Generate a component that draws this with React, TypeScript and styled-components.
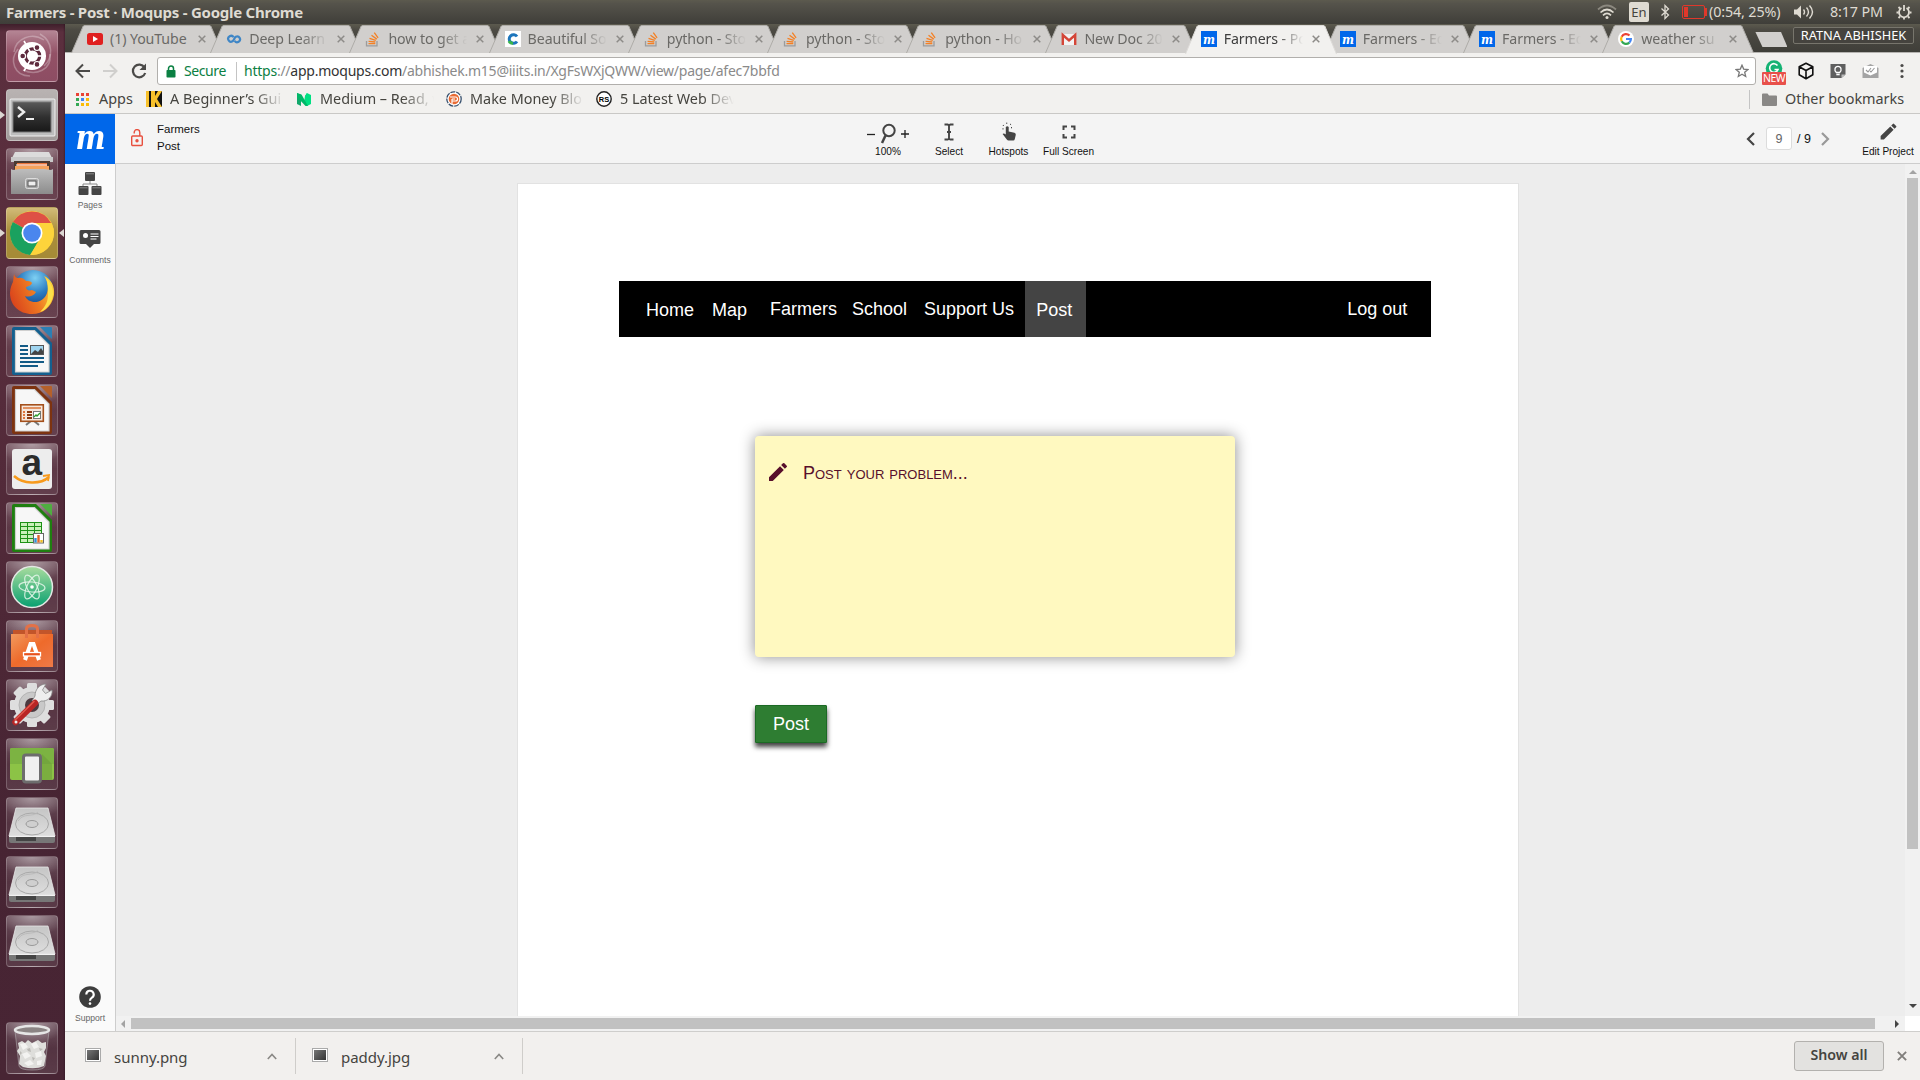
import React from "react";
import styled, { createGlobalStyle, css } from "styled-components";

const UI = `"Noto Sans", "Open Sans", sans-serif`;
const ARIAL = `"Liberation Sans", Arial, sans-serif`;

const Global = createGlobalStyle`
  * { box-sizing: border-box; }
  body { margin: 0; background: #ededed; font-family: ${UI}; overflow: hidden; }
  svg { display: block; flex: none; }
`;

const Screen = styled.div`
  width: 1920px;
  height: 1080px;
  display: flex;
  flex-direction: column;
  overflow: hidden;
`;

/* ---------- Desktop panel ---------- */
const TopPanel = styled.header`
  height: 24px;
  flex: none;
  display: flex;
  align-items: center;
  background: linear-gradient(#5c5a4e 0, #55534b 15%, #3f3e39 100%);
  color: #dfdbd2;
  padding: 0 8px 0 6px;
  white-space: nowrap;
`;
const WindowTitle = styled.div`
  font: 700 15px/24px ${UI};
  letter-spacing: -0.25px;
  flex: 1;
`;
const Tray = styled.div`
  display: flex;
  align-items: center;
  height: 24px;
`;
const TrayText = styled.span<{ $w: number; $ml: number; $mr: number }>`
  font: 14.3px/24px ${UI};
  letter-spacing: -0.12px;
  width: ${(p) => p.$w}px;
  margin: 0 ${(p) => p.$mr}px 0 ${(p) => p.$ml}px;
`;
const Layout = styled.span`
  width: 20px;
  height: 20px;
  margin: 0 11px 0 12px;
  border-radius: 2px;
  background: #dfdbd2;
  color: #45433d;
  font: 13px/21px ${UI};
  text-align: center;
`;
const Battery = styled.span`
  width: 23px;
  height: 14px;
  margin-left: 12px;
  border: 1.5px solid #e0382b;
  border-radius: 2px;
  padding: 1px;
  &::before {
    content: "";
    display: block;
    width: 4px;
    height: 100%;
    background: #e0382b;
  }
`;

const Body = styled.div`
  flex: 1;
  display: flex;
  min-height: 0;
`;

/* ---------- Launcher ---------- */
const Launcher = styled.nav`
  width: 65px;
  flex: none;
  background: linear-gradient(90deg, transparent 63px, rgba(30, 8, 20, 0.35)),
    linear-gradient(#3f1f2b 0, #5b2f3e 8px, #572d3c 30%, #472433 75%, #482534 100%);
  display: flex;
  flex-direction: column;
  gap: 7px;
  padding: 6px 0 6px;
`;
const Slot = styled.div<{ $end?: boolean }>`
  display: flex;
  align-items: center;
  height: 52px;
  flex: none;
  ${(p) => p.$end && css`margin-top: auto;`}
`;
const Pip = styled.i<{ $on?: boolean; $right?: boolean }>`
  width: ${(p) => (p.$right ? 5 : 6)}px;
  flex: none;
  &::before {
    content: "";
    display: ${(p) => (p.$on ? "block" : "none")};
    width: 0;
    border: solid transparent;
    border-width: 4px 0 4px 5px;
    border-left-color: #dcd7d3;
    transform: ${(p) => (p.$right ? "translateX(1px) scaleX(-1)" : "none")};
  }
`;
const Tile = styled.div<{ $bg?: string }>`
  width: 52px;
  height: 52px;
  border-radius: 4px;
  border: 1px solid rgba(255, 255, 255, 0.2);
  background: ${(p) =>
    p.$bg ||
    "radial-gradient(ellipse 34px 20px at 50% 0, rgba(255,255,255,.42), rgba(255,255,255,0)), linear-gradient(rgba(255,255,255,.2), rgba(255,255,255,.07) 50%, rgba(255,255,255,.1))"};
  svg { margin: -1px; }
`;

const I = ({ children }: { children: React.ReactNode }) => (
  <svg width="52" height="52" viewBox="0 0 52 52">{children}</svg>
);

const Dash = () => (
  <I>
    <g fill="none" stroke="#fff" strokeOpacity=".28" strokeWidth="1.5">
      <path d="M8 22C10 8 26 2 38 10" /><path d="M34 4c14 8 13 24 4 32" /><path d="M44 24c2 16-14 22-27 16" /><path d="M24 46C8 46 3 30 12 19" />
    </g>
    <circle cx="26" cy="26" r="14" fill="#fff" />
    <circle cx="26.500" cy="26" r="7.200" fill="none" stroke="#5d2a3d" strokeWidth="3.200" />
    <path d="M26.500 26L18 11M26.500 26L18 41M26.500 26H40" stroke="#fff" strokeWidth="1.600" />
    <g fill="#5d2a3d" stroke="#fff" strokeWidth="1.200"><circle cx="16.700" cy="26" r="2.900" /><circle cx="31" cy="17.600" r="2.900" /><circle cx="31" cy="34.400" r="2.900" /></g>
  </I>
);
const Terminal = () => (
  <I>
    <defs><linearGradient id="tm" x2="0" y2="1"><stop stopColor="#5a5a5a" /><stop offset=".5" stopColor="#303030" /><stop offset="1" stopColor="#181818" /></linearGradient></defs>
    <rect x="4" y="10" width="45" height="37" rx="1" fill="#bdbdbd" stroke="#fff" strokeOpacity=".8" />
    <rect x="7" y="13" width="38" height="30" fill="url(#tm)" stroke="#777" />
    <path d="M12 18l6 5-6 5" fill="none" stroke="#eee" strokeWidth="2.400" /><path d="M20 30h8" stroke="#eee" strokeWidth="2" />
  </I>
);
const Files = () => (
  <I>
    <defs><linearGradient id="fl" x2="0" y2="1"><stop stopColor="#bdbdbd" /><stop offset="1" stopColor="#8c8c8c" /></linearGradient></defs>
    <path d="M9 4h34l4 8H5z" fill="#dcdcdc" /><rect x="5" y="9" width="42" height="5" fill="#c9c9c9" />
    <rect x="8" y="13" width="36" height="11" fill="#4a3a32" /><path d="M11 15h30v7H11z" fill="#e9743a" /><path d="M9 18h34v5H9z" fill="#f4a35c" /><path d="M10 17h31" stroke="#fff" />
    <path d="M7 22l7-1h24l7 1 2-1v25H5V21z" fill="url(#fl)" />
    <rect x="19.500" y="30.500" width="13" height="10" rx="2" fill="#aaa" stroke="#ddd" /><rect x="22" y="33" width="8" height="5" fill="#eee" stroke="#555" />
  </I>
);
const Chrome = () => (
  <I>
    <circle cx="26" cy="26" r="22" fill="#fdd43b" />
    <path d="M26 26L6.900 15A22 22 0 0 1 45.100 16H26z" fill="#de5145" />
    <path d="M6.900 15A22 22 0 0 0 24 47.900L35 31z" fill="#1aa15f" />
    <path d="M45.400 16A22 22 0 0 1 24.500 47.900L34.500 30 35 16z" fill="#fdd43b" />
    <circle cx="26" cy="26" r="10.500" fill="#fff" /><circle cx="26" cy="26" r="8.800" fill="#4a86ee" />
  </I>
);
const Firefox = () => (
  <I>
    <defs>
      <radialGradient id="fg" cx=".55" cy=".2" r=".8"><stop stopColor="#7ed0f3" /><stop offset=".5" stopColor="#2a7cc2" /><stop offset="1" stopColor="#123a7c" /></radialGradient>
      <linearGradient id="fo" x1="0" x2="1" y1=".7" y2=".3"><stop stopColor="#d8401c" /><stop offset=".55" stopColor="#ee7b22" /><stop offset="1" stopColor="#fbd23a" /></linearGradient>
    </defs>
    <circle cx="27" cy="24" r="20" fill="url(#fg)" />
    <path d="M8 8c1 3 2 4 4 4 4-1 6 1 8 3 2 0 5 0 6 2-1 3-4 3-6 4 0 3 3 4 6 3l4 2c-3 5-8 5-11 4 3 8 18 9 22-3 2-6 0-13-3-17 7 3 11 10 10 19-2 12-11 19-22 19C13 48 4 39 4 27 4 22 6 18 7 16z" fill="url(#fo)" />
    <path d="M40 12c8 7 9 18 4 26-3 4-6 7-10 8 6-6 8-11 8-18 0-6 0-11-2-16z" fill="#fce04a" />
  </I>
);
const LibreDoc = ({ main, dark, children }: { main: string; dark: string; children: React.ReactNode }) => (
  <I>
    <path d="M8 2h22l16 16v30q0 2-2 2H8q-2 0-2-2V4q0-2 2-2z" fill={dark} /><path d="M34 2h11q1 0 1 1v11z" fill={main} />
    <path d="M9.500 5.500h19L43 20v27H9.500z" fill="#f7f7f7" stroke="#cfcfcf" strokeWidth="1.200" />
    {children}
  </I>
);
const Writer = () => (
  <LibreDoc main="#2c7fb4" dark="#14608f">
    <path d="M14 21h8M14 25h8M14 29h8M14 33h24M14 37h24M14 41h18" stroke="#145b86" strokeWidth="2" />
    <rect x="24.500" y="20.500" width="13" height="9" fill="#9fd4ef" stroke="#555" /><path d="M25 29l4-4 3 2 3-4 2 3v3z" fill="#444" />
  </LibreDoc>
);
const Impress = () => (
  <LibreDoc main="#b5602a" dark="#7d3310">
    <path d="M20 41l5-4h3l5 4" fill="none" stroke="#777" strokeWidth="2" />
    <rect x="14.800" y="20.800" width="22.500" height="16.500" fill="#f6e7dc" stroke="#a4501c" strokeWidth="1.600" />
    <path d="M17 24h18" stroke="#d9743a" strokeWidth="1.500" /><path d="M17 28h2M17 31h2M17 34h2" stroke="#e0763c" strokeWidth="2" /><path d="M21 28h5M21 31h5M21 34h5" stroke="#8c3b12" strokeWidth="2" />
    <rect x="27.500" y="27.500" width="7" height="7" fill="#fff" stroke="#777" /><path d="M28 33l2-2 1 1 3-3" stroke="#2a9b2a" fill="none" strokeWidth="1.300" />
  </LibreDoc>
);
const AmazonMark = styled.text`
  font: 700 37px "Liberation Sans", Arial, sans-serif;
  fill: #2b2b2b;
`;
const Amazon = () => (
  <I>
    <rect x="6" y="6" width="40" height="40" rx="3" fill="#ededed" />
    <AmazonMark x="15.500" y="32">a</AmazonMark>
    <path d="M8 33c9 8 26 9 35 1" fill="none" stroke="#f79a1c" strokeWidth="2.600" /><path d="M37 33l6-1-1 6" fill="none" stroke="#f79a1c" strokeWidth="1.800" />
  </I>
);
const Calc = () => (
  <LibreDoc main="#4fae40" dark="#1f7f10">
    <rect x="14" y="20" width="22" height="21" fill="#1d9116" />
    <g fill="#c8f0b8">{[0, 1, 2, 3, 4].map((r) => [0, 1, 2].map((c) => <rect key={`${r}${c}`} x={15 + c * 7} y={21 + r * 4} width="6" height="3" />))}</g>
    <rect x="27.500" y="31.500" width="10" height="9.500" fill="#fff" stroke="#666" /><path d="M29.500 36v4.500" stroke="#3092d6" strokeWidth="2.400" /><path d="M32.500 33v7.500" stroke="#e0662a" strokeWidth="2.400" /><path d="M35.500 38v2.500" stroke="#f0bd20" strokeWidth="2.400" />
  </LibreDoc>
);
const Atom = () => (
  <I>
    <defs><linearGradient id="at" x2="0" y2="1"><stop stopColor="#a8dc9e" /><stop offset="1" stopColor="#08a070" /></linearGradient></defs>
    <circle cx="26" cy="26" r="20.500" fill="url(#at)" stroke="#e4e8e4" strokeWidth="1.500" />
    <g fill="none" stroke="#e6f6ea" strokeOpacity=".85" strokeWidth="1.200"><ellipse cx="26" cy="26" rx="13" ry="5" transform="rotate(5 26 26)" /><ellipse cx="26" cy="26" rx="13" ry="5" transform="rotate(64 26 26)" /><ellipse cx="26" cy="26" rx="13" ry="5" transform="rotate(116 26 26)" /></g>
    <circle cx="26" cy="26" r="1.800" fill="#fff" />
  </I>
);
const Software = () => (
  <I>
    <defs><linearGradient id="sw" x2="1" y2="1"><stop stopColor="#f29a5e" /><stop offset=".5" stopColor="#ee6a2b" /><stop offset="1" stopColor="#ee7a48" /></linearGradient></defs>
    <path d="M7 10h39v5H7z" fill="#c2552a" /><path d="M5 14h42v33H5z" fill="url(#sw)" />
    <path d="M20.500 18V9q0-3.500 5.500-3.500t5.500 3.500v9" fill="none" stroke="#e37147" strokeWidth="3" />
    <path d="M19 40l5.500-16h3L33 40" fill="none" stroke="#fff" strokeWidth="4" /><rect x="17.500" y="32.500" width="17" height="3.500" fill="#e8521c" stroke="#fff" strokeWidth="1.300" />
  </I>
);
const Settings = () => (
  <I>
    <g fill="#dedede">
      {[0, 45, 90, 135].map((a) => <rect key={a} x="21" y="4" width="10" height="44" rx="1.500" transform={`rotate(${a} 26 26)`} />)}
      <circle cx="26" cy="26" r="18" />
    </g>
    <circle cx="26" cy="26" r="13" fill="#c9c9c9" stroke="#b4b4b4" /><circle cx="26" cy="26" r="7" fill="#4c3a40" />
    <path d="M29 17c0-7 5-12 11-12l-3.500 6 3 3.500L46 11c1 6-4 12-11 11l-5 4-4-4z" fill="#eee" stroke="#888" strokeWidth=".8" />
    <path d="M29 24L9.500 43" stroke="#b92525" strokeWidth="6.500" strokeLinecap="round" /><path d="M28 22.500L9 41" stroke="#e05a4e" strokeWidth="1.500" strokeLinecap="round" /><circle cx="10" cy="43" r="1.500" fill="#eee" />
  </I>
);
const Android = () => (
  <I>
    <rect x="4" y="10" width="44" height="32" rx="2" fill="#8cc346" /><path d="M4 26V12q0-2 2-2h40q2 0 2 2v14z" fill="#7cb342" /><path d="M36 16l10 10v16H36z" fill="#6a9a38" opacity=".5" />
    <rect x="17.500" y="17" width="17" height="27" rx="2.500" fill="#f0f0f0" stroke="#6d6d6d" strokeWidth="3" />
  </I>
);
const Disk = () => (
  <I>
    <defs><linearGradient id="hd" x2="0" y2="1"><stop stopColor="#c5c5c5" /><stop offset="1" stopColor="#dedede" /></linearGradient></defs>
    <path d="M10 11h32l7 28H3z" fill="url(#hd)" stroke="#e9e9e9" strokeWidth=".8" /><path d="M3 39h46v5q0 2-2 2H5q-2 0-2-2z" fill="#777" /><path d="M10 40h20v4H10z" fill="#444" /><path d="M3 39.500h46" stroke="#f2f2f2" />
    <ellipse cx="26" cy="27" rx="16.500" ry="11" fill="none" stroke="#a9a9a9" /><ellipse cx="26" cy="27" rx="6" ry="3.500" fill="#cfcfcf" stroke="#999" /><path d="M12 24c6-9 14-3 20-9" fill="none" stroke="#bbb" />
  </I>
);
const Trash = () => (
  <I>
    <path d="M9 9l4 35q1 4 13 4t13-4l4-35z" fill="#fff" fillOpacity=".12" stroke="#bbb" strokeOpacity=".5" />
    <path d="M12 21l4-2 3 2 3-3 4 3 6-3 4 3 4-1 0 6-2 4 2 4-2 10q-9 4-21 1l-4-3 1-8-3-5 2-3z" fill="#dededb" />
    <g fill="#f3f3f1"><path d="M14 22l5-1 3 4-5 3zM25 22l5-2 3 5-5 2zM16 32l5-2 4 4-6 3zM29 31l6-2 1 5-6 2zM18 41l6-3 4 4-6 2zM31 39l5-1-1 5-4 0z" /></g>
    <g fill="#b9b8b4"><path d="M21 27l3-1 1 4-3-1zM33 26l4 1-3 2zM26 35l3 1-2 3zM14 29l2 2-2 2z" /></g>
    <ellipse cx="26" cy="8" rx="17" ry="4" fill="#8b8484" stroke="#e6e6e6" strokeWidth="2.500" />
  </I>
);

/* ---------- Browser ---------- */
const Browser = styled.main`
  flex: 1;
  min-width: 0;
  display: flex;
  flex-direction: column;
  background: #f2f1ef;
`;
const TabStrip = styled.div`
  height: 29px;
  flex: none;
  padding: 1px 0 0 6px;
  display: flex;
  background: linear-gradient(#5c5a4e 0, #4d4b44 20%, #3f3e39 100%);
  border-bottom: 1px solid #b5b3b0;
`;
const TabBox = styled.div<{ $active?: boolean }>`
  width: 152px;
  height: ${(p) => (p.$active ? 29 : 28)}px;
  flex: none;
  margin-right: -12.8px;
  position: relative;
  z-index: ${(p) => (p.$active ? 2 : 1)};
  display: flex;
  align-items: center;
  padding: 0 0 1px 16px;
  color: ${(p) => (p.$active ? "#3e3e3e" : "#6a6966")};
`;
const TabShape = styled.svg`
  position: absolute;
  left: 0;
  top: 0;
  z-index: -1;
`;
const TabText = styled.span<{ $full?: boolean }>`
  width: 82px;
  margin: 0 6px 0 7px;
  overflow: hidden;
  white-space: nowrap;
  font: 14.2px/28px ${UI};
  letter-spacing: -0.1px;
  mask-image: ${(p) => (p.$full ? "none" : "linear-gradient(90deg, #000 53px, transparent 79px)")};
`;
const NewTab = styled.div`
  width: 32px;
  height: 15px;
  margin: 7px 0 0 14px;
  background: #d1cfcd;
  clip-path: polygon(0 0, 80% 0, 100% 100%, 22% 100%);
`;
const Profile = styled.div`
  width: 121px;
  height: 17px;
  margin: 2px 6px 0 auto;
  border: 1px solid #77756c;
  border-radius: 2px;
  background: #45433e;
  color: #fff;
  font: 12.8px/15px ${UI};
  text-align: center;
  white-space: nowrap;
`;

const Toolbar = styled.div`
  height: 35px;
  flex: none;
  display: flex;
  align-items: center;
  padding: 1px 6px 0 9px;
  gap: 8px;
`;
const Address = styled.div`
  width: 1599px;
  flex: none;
  height: 28px;
  margin: 0 -2px 0 1px;
  padding: 0 6px 0 8px;
  border: 1px solid #b1afac;
  border-radius: 3px;
  background: #fff;
  display: flex;
  align-items: center;
  font: 14px/26px ${UI};
  white-space: nowrap;
`;
const Secure = styled.span`
  color: #0b8043;
  width: 52px;
  margin: 0 0 0 8px;
  letter-spacing: -0.4px;
`;
const Url = styled.span`
  flex: 1;
  margin-left: 7px;
  letter-spacing: -0.24px;
  color: #8a8a8a;
  b { font-weight: 400; color: #0b8043; }
  em { font-style: normal; color: #333; }
`;
const Bar = styled.i`
  width: 1px;
  height: 19px;
  flex: none;
  background: #c4c4c4;
`;
const Extension = styled.div`
  width: 24px;
  height: 28px;
  flex: none;
  display: flex;
  flex-direction: column;
  justify-content: center;
  align-items: center;
`;
const NewBadge = styled.span`
  width: 24px;
  height: 13px;
  margin-top: -6px;
  z-index: 1;
  border-radius: 1px;
  background: #e8504a;
  color: #fff;
  font: 10.5px/13px ${UI};
  letter-spacing: -0.5px;
  text-align: center;
`;
const Grammarly = styled(Extension)`
  padding-top: 3px;
`;

const Bookmarks = styled.div`
  height: 26px;
  flex: none;
  display: flex;
  align-items: center;
  border-bottom: 1px solid #c9c8c6;
  padding: 0 14px 3px 11px;
  color: #45443f;
`;
const Bookmark = styled.div<{ $w: number; $gap?: number; $fade?: number }>`
  width: ${(p) => p.$w}px;
  display: flex;
  align-items: center;
  gap: ${(p) => p.$gap ?? 8}px;
  font: 14.4px/22px ${UI};
  white-space: nowrap;
  span {
    ${(p) => p.$fade && css`
      width: ${p.$fade}px;
      overflow: hidden;
      mask-image: linear-gradient(90deg, #000 ${p.$fade - 32}px, transparent ${p.$fade}px);
    `}
  }
`;
const Spacer = styled.i`
  flex: 1;
`;
const Other = styled(Bookmark)`
  margin-left: 12px;
`;

/* ---------- Moqups ---------- */
const Editor = styled.section`
  flex: 1;
  min-height: 0;
  display: grid;
  grid-template: 50px 1fr / 50px 1fr;
`;
const Logo = styled.div`
  background: #0067ea;
  color: #fff;
  font: italic 700 33px/48px "DejaVu Serif", serif;
  text-align: center;
  overflow: hidden;
  span { display: inline-block; transform: scaleX(0.86); }
`;
const AppHeader = styled.div`
  background: #f4f4f4;
  border-bottom: 1px solid #cdcdcd;
  display: flex;
  align-items: center;
  font-family: ${ARIAL};
  color: #111;
`;
const Crumbs = styled.div`
  width: 742px;
  display: flex;
  align-items: center;
  gap: 14px;
  padding-left: 16px;
  font-size: 11.5px;
  line-height: 17px;
  margin-top: -1px;
`;
const Tool = styled.div<{ $w: number }>`
  width: ${(p) => p.$w}px;
  height: 50px;
  display: grid;
  grid-template-rows: 26px 14px;
  align-content: start;
  justify-items: center;
  align-items: center;
  padding-top: 5px;
  font-size: 10.1px;
  white-space: nowrap;
`;
const ZoomRow = styled.div`
  display: flex;
  align-items: center;
  gap: 5px;
  margin-top: 4px;
`;
const Pager = styled.div`
  display: flex;
  align-items: center;
  margin-left: auto;
  font-size: 12.5px;
`;
const PageInput = styled.div`
  width: 26px;
  height: 23px;
  margin: 0 5px 0 10px;
  border: 1px solid #dcdcdc;
  border-radius: 3px;
  background: #fff;
  color: #666;
  line-height: 22px;
  text-align: center;
`;
const PagerNext = styled.span`
  margin-left: 9px;
`;
const EditTool = styled(Tool)`
  margin-left: 26px;
`;
const Side = styled.aside`
  background: #fafafa;
  display: flex;
  flex-direction: column;
  padding-bottom: 8px;
  font: 8.6px/10px ${ARIAL};
  color: #666;
`;
const SideItem = styled.div<{ $top?: number; $bottom?: boolean }>`
  display: flex;
  flex-direction: column;
  align-items: center;
  gap: 5px;
  margin-top: ${(p) => (p.$bottom ? "auto" : `${p.$top}px`)};
`;
const Work = styled.div`
  border-left: 1px solid #cdcdcd;
  background: #ededed;
  display: grid;
  grid-template: 1fr 15px / 1fr 15px;
  min-height: 0;
`;
const Canvas = styled.div`
  padding: 19px 0 0 401px;
  overflow: hidden;
`;
const Page = styled.div`
  width: 1002px;
  height: 1000px;
  background: #fff;
  border: 1px solid #e2e2e2;
  padding: 97px 0 0 101px;
  font-family: ${ARIAL};
`;
const Nav = styled.div`
  width: 812px;
  height: 56px;
  display: flex;
  background: #000;
  color: #fff;
  font-size: 18px;
  line-height: 56px;
`;
const NavLink = styled.a<{ $ml: number; $low?: boolean }>`
  margin-left: ${(p) => p.$ml}px;
  padding-top: ${(p) => (p.$low ? 1 : 0)}px;
  height: 56px;
  white-space: nowrap;
`;
const NavActive = styled(NavLink)`
  width: 61px;
  padding-left: 11px;
  background: #444;
`;
const Note = styled.div`
  width: 480px;
  height: 221px;
  margin: 99px 0 0 136px;
  padding: 24px 11px;
  display: flex;
  gap: 13px;
  border-radius: 4px;
  background: #fff9c0;
  box-shadow: 0 0 15px rgba(0, 0, 0, 0.45);
  color: #570f2b;
  font-size: 18px;
  line-height: 26px;
  font-variant: small-caps;
`;
const PostButton = styled.button`
  display: block;
  width: 72px;
  height: 38px;
  margin: 48px 0 0 136px;
  padding: 1px 0 0;
  border: 1px solid #1b6a24;
  border-radius: 1px;
  background: #2e7d32;
  box-shadow: 0 4px 5px rgba(0, 0, 0, 0.75);
  color: #fff;
  font: 18px ${ARIAL};
`;
const HScroll = styled.div`
  background: #f1f1f1;
  display: flex;
  align-items: center;
  gap: 4px;
  padding-left: 3px;
`;
const VScroll = styled.div`
  background: #f1f1f1;
  display: flex;
  flex-direction: column;
  align-items: center;
  gap: 2px;
  padding: 4px 0 6px;
`;
const Thumb = styled.i<{ $w: number; $h: number }>`
  width: ${(p) => p.$w}px;
  height: ${(p) => p.$h}px;
  background: #c1c1c1;
`;
const Corner = styled.div`
  background: #fff;
`;
const VEnd = styled.span`
  margin-top: auto;
`;
const HEnd = styled.span`
  margin: 0 4px 0 auto;
`;

/* ---------- Downloads ---------- */
const Shelf = styled.footer`
  height: 49px;
  flex: none;
  display: flex;
  align-items: center;
  border-top: 1px solid #cfcecc;
  background: #f2f0ee;
  color: #45443f;
`;
const Download = styled.div<{ $w: number; $pl: number }>`
  width: ${(p) => p.$w}px;
  height: 36px;
  padding: 0 18px 0 ${(p) => p.$pl}px;
  border-right: 1px solid #cfcdca;
  display: flex;
  align-items: center;
  font: 15px/36px ${UI};
  span { flex: 1; padding: 1px 0 0 13px; letter-spacing: -0.03px; }
`;
const Thumbnail = styled.i`
  width: 16px;
  height: 14px;
  margin-bottom: 2px;
  border: 1px solid #aaa;
  background: linear-gradient(135deg, #777, #333) content-box, #fff;
  padding: 1px;
`;
const ShowAll = styled.button`
  width: 90px;
  height: 30px;
  margin: 0 13px 0 auto;
  padding: 0 0 3px;
  border: 1px solid #b3b1ae;
  border-radius: 3px;
  background: #e3e2e0;
  color: #45443f;
  font: 600 14.2px ${UI};
`;
const CloseShelf = styled.span`
  margin-right: 13px;
`;

/* ---------- Small drawings ---------- */
const X = ({ s = 8, c = "#8d8b88" }) => (
  <svg width={s} height={s} viewBox="0 0 8 8"><path d="M.7.7l6.600 6.600M7.300.7L.7 7.300" stroke={c} strokeWidth="1.500" /></svg>
);
const Arrow = ({ d, c = "#454545" }: { d: string; c?: string }) => (
  <svg width="8" height="8" viewBox="0 0 8 8"><path d={d} fill={c} /></svg>
);
const Chevron = ({ c, flip }: { c: string; flip?: boolean }) => (
  <svg width="10" height="14" viewBox="0 0 10 14"><path d={flip ? "M2 1l6 6-6 6" : "M8 1L2 7l6 6"} fill="none" stroke={c} strokeWidth="2.200" /></svg>
);
const UpCaret = () => (
  <svg width="10" height="7" viewBox="0 0 10 7"><path d="M.8 6L5 1.500 9.200 6" fill="none" stroke="#8a8885" strokeWidth="1.600" /></svg>
);
const Pencil = ({ s, c }: { s: number; c: string }) => (
  <svg width={s} height={s} viewBox="0 0 24 24"><path fill={c} d="M3 17.250V21h3.750L17.810 9.940l-3.750-3.750L3 17.250zM20.710 7.040a1 1 0 0 0 0-1.410l-2.340-2.340a1 1 0 0 0-1.410 0l-1.830 1.830 3.750 3.750 1.830-1.830z" /></svg>
);
const MText = styled.text`
  font: italic 700 13px "DejaVu Serif", serif;
  fill: #fff;
  text-anchor: middle;
`;
const Favicon = ({ kind }: { kind: string }) => (
  <svg width="16" height="16" viewBox="0 0 16 16">
    {kind === "yt" && <><rect y="2" width="16" height="12" rx="2.500" fill="#e02020" /><path d="M6 5l5 3-5 3z" fill="#fff" /></>}
    {kind === "dl" && <path d="M7.600 6.300A2.900 2.900 0 1 0 6.500 10.300C8 9.500 8.400 6.500 9.800 5.700A2.900 2.900 0 1 1 8.700 9.900" fill="none" stroke="#3f86c6" strokeWidth="2.200" />}
    {kind === "so" && <g fill="none"><path d="M1.500 10v4.800h10.500V10" stroke="#9b9c9d" strokeWidth="1.300" /><path d="M3.500 12.600h6.800M3.600 10.300l6.700.7M4.500 7.400l6.300 1.900M6.500 4.300l5.300 3.800M9.300 1.600l3.800 5.200" stroke="#f48024" strokeWidth="1.300" /></g>}
    {kind === "c" && <><rect width="16" height="16" fill="#fff" /><path d="M12 5.500A4.300 4.300 0 1 0 12 10.500" fill="none" stroke="#1c75bc" strokeWidth="3" /><path d="M4 10a4.300 4.300 0 0 0 4 2.300" fill="none" stroke="#39b54a" strokeWidth="3" /></>}
    {kind === "gm" && <><rect x="1" y="3" width="14" height="11" fill="#f2f2f2" /><path d="M1.800 14V4L8 9.500 14.200 4v10" fill="none" stroke="#d44638" strokeWidth="2.400" /></>}
    {kind === "mq" && <><rect width="16" height="16" fill="#0067ea" /><MText x="8" y="12.500" textLength="12" lengthAdjust="spacingAndGlyphs">m</MText></>}
    {kind === "gg" && <><circle cx="8" cy="8" r="8" fill="#fff" /><g fill="none" strokeWidth="2.200"><path d="M11.500 4.600A4.900 4.900 0 0 0 3.700 5.700" stroke="#ea4335" /><path d="M3.700 5.700a4.900 4.900 0 0 0 0 4.600" stroke="#fbbc05" /><path d="M3.700 10.300a4.900 4.900 0 0 0 7.600 1.300" stroke="#34a853" /><path d="M11.300 11.600A4.900 4.900 0 0 0 12.900 8H8" stroke="#4285f4" /></g></>}
  </svg>
);

const tabs: [string, string][] = [
  ["yt", "(1) YouTube"], ["dl", "Deep Learn"], ["so", "how to get a"], ["c", "Beautiful So"],
  ["so", "python - Sto"], ["so", "python - Sto"], ["so", "python - Ho"], ["gm", "New Doc 20"],
  ["mq", "Farmers - Po"], ["mq", "Farmers - Ed"], ["mq", "Farmers - Ed"], ["gg", "weather su"],
];
const dots = ["#ea4335", "#ea4335", "#ea4335", "#34a853", "#4285f4", "#fbbc05", "#34a853", "#fbbc05", "#fbbc05"];
const RsText = styled.text`
  font: 700 7.5px "Liberation Sans", Arial, sans-serif;
  text-anchor: middle;
`;

const launcherItems: { el: React.ReactNode; bg?: string; left?: boolean; right?: boolean; end?: boolean }[] = [
  { el: <Dash />, bg: "linear-gradient(#b48594, #935166 45%, #8d4d63)" },
  { el: <Terminal />, bg: "linear-gradient(#b9b3b2, #a19c9b)", left: true },
  { el: <Files /> },
  { el: <Chrome />, bg: "linear-gradient(#d2bb78, #ab8f3d 45%, #a58a36)", left: true, right: true },
  { el: <Firefox /> }, { el: <Writer /> }, { el: <Impress /> }, { el: <Amazon /> }, { el: <Calc /> },
  { el: <Atom /> }, { el: <Software /> }, { el: <Settings /> }, { el: <Android /> },
  { el: <Disk /> }, { el: <Disk /> }, { el: <Disk /> }, { el: <Trash />, end: true },
];

export default function App() {
  return (
    <Screen>
      <Global />
      <TopPanel>
        <WindowTitle>Farmers - Post · Moqups - Google Chrome</WindowTitle>
        <Tray>
          <svg width="20" height="16" viewBox="0 0 20 16" fill="none" strokeWidth="1.700"><path d="M1 5.500q9-8 18 0" stroke="#8b887f" /><path d="M3.500 8.500q6.500-6 13 0" stroke="#dfdbd2" /><path d="M6 11.300q4-3.800 8 0" stroke="#dfdbd2" /><circle cx="10" cy="13.500" r="1.500" fill="#dfdbd2" /></svg>
          <Layout>En</Layout>
          <svg width="10" height="16" viewBox="0 0 10 16"><path d="M1.500 4.500l7 6.500L5 14.500v-13L8.500 5l-7 6.500" fill="none" stroke="#dfdbd2" strokeWidth="1.300" /></svg>
          <Battery />
          <svg width="3" height="8"><rect width="2" height="8" fill="#e0382b" /></svg>
          <TrayText $w={74} $ml={1} $mr={11}>(0:54, 25%)</TrayText>
          <svg width="20" height="16" viewBox="0 0 20 16"><path d="M0 5.500h3l4-4v13l-4-4H0z" fill="#dfdbd2" /><path d="M9.500 5.500q2 2.500 0 5M12.500 3.500q4 4.500 0 9M15.500 1.500q6 6.500 0 13" fill="none" stroke="#dfdbd2" strokeWidth="1.400" /></svg>
          <TrayText $w={54} $ml={16} $mr={12}>8:17 PM</TrayText>
          <svg width="16" height="16" viewBox="0 0 16 16"><path d="M5.500 4a5 5 0 1 0 5 0M8 1v6" fill="none" stroke="#dfdbd2" strokeWidth="1.800" /><path d="M2.500 3l1.500 1.500M12 4.500L13.500 3M.5 8.500h2M13.500 8.500h2M2.500 14L4 12.500M12 12.500l1.500 1.500M8 13.500v2" stroke="#dfdbd2" strokeWidth="1.800" /></svg>
        </Tray>
      </TopPanel>
      <Body>
        <Launcher>
          {launcherItems.map((it, i) => (
            <Slot key={i} $end={it.end}><Pip $on={it.left} /><Tile $bg={it.bg}>{it.el}</Tile><Pip $on={it.right} $right /></Slot>
          ))}
        </Launcher>
        <Browser>
          <TabStrip>
            {tabs.map(([icon, title], i) => {
              const active = i === 8;
              const h = active ? 29 : 28;
              return (
                <TabBox key={i} $active={active}>
                  <TabShape width="152" height={h} viewBox={`0 0 152 ${h}`}>
                    <path d={`M.5 ${h}L12 1.500Q12.500.5 14 .5H138Q139.500.5 140 1.500L151.500 ${h}`} fill={active ? "#f2f1ef" : "#d1cfcd"} stroke={active ? "#dddbd8" : "#aeaca8"} />
                  </TabShape>
                  <Favicon kind={icon} />
                  <TabText $full={i === 0}>{title}</TabText>
                  <X />
                </TabBox>
              );
            })}
            <NewTab />
            <Profile>RATNA ABHISHEK</Profile>
          </TabStrip>
          <Toolbar>
            <svg width="18" height="16" viewBox="0 0 18 16"><path d="M16 8H3M9 1.500L2.500 8 9 14.500" fill="none" stroke="#4b4a48" strokeWidth="2" /></svg>
            <svg width="20" height="16" viewBox="0 0 20 16"><path d="M3 8h13M10 1.500L16.500 8 10 14.500" fill="none" stroke="#d0cfcd" strokeWidth="2" /></svg>
            <svg width="20" height="18" viewBox="0 0 20 18"><path d="M16.500 5.500A6.300 6.300 0 1 0 17.200 11" fill="none" stroke="#4b4a48" strokeWidth="2.200" /><path d="M18 1.500v6.500h-6.500z" fill="#4b4a48" /></svg>
            <Address>
              <svg width="10" height="13" viewBox="0 0 10 13"><rect x=".5" y="5" width="9" height="7.500" rx=".8" fill="#0b8043" /><path d="M2.500 6V3.500a2.500 2.500 0 0 1 5 0V6" fill="none" stroke="#0b8043" strokeWidth="1.500" /></svg>
              <Secure>Secure</Secure><Bar />
              <Url><b>https</b>://<em>app.moqups.com</em>/abhishek.m15@iiits.in/XgFsWXjQWW/view/page/afec7bbfd</Url>
              <svg width="14" height="14" viewBox="0 0 14 14"><path d="M7 1.200l1.700 3.900 4.200.4-3.200 2.800 1 4.200L7 10.300l-3.700 2.200 1-4.200L1.100 5.500l4.200-.4z" fill="none" stroke="#777" strokeWidth="1.300" /></svg>
            </Address>
            <Grammarly>
              <svg width="18" height="18" viewBox="0 0 18 18"><circle cx="9" cy="8.500" r="8.300" fill="#15b374" /><path d="M12.500 5.500a4.300 4.300 0 1 0 .5 4H9.500" fill="none" stroke="#fff" strokeWidth="1.600" /></svg>
              <NewBadge>NEW</NewBadge>
            </Grammarly>
            <Extension><svg width="16" height="18" viewBox="0 0 16 18"><path d="M8 1.200l6.800 3.600v8L8 16.800l-6.800-4v-8zM1.200 4.800L8 8.500l6.800-3.700M8 8.500v8" fill="none" stroke="#111" strokeWidth="1.600" strokeLinejoin="round" /></svg></Extension>
            <Extension><svg width="16" height="16" viewBox="0 0 16 16"><path d="M.5 1h15v10.500L11.500 15H.5z" fill="#5f5f5f" /><path d="M15.500 11.500l-4 3.500v-3.500z" fill="#bbb" /><path d="M6.300 9.500C3.800 7.500 4.800 3.300 8 3.300s4.200 4.200 1.700 6.200z" fill="none" stroke="#fff" strokeWidth="1.300" /><path d="M6.300 11.500h3.400" stroke="#fff" strokeWidth="1.600" /></svg></Extension>
            <Extension><svg width="17" height="14" viewBox="0 0 17 14"><path d="M.5 4L8.500 0l8 4v10H.5z" fill="#a4a4a4" /><path d="M2 2h13v6.500L8.500 11.500 2 8.500z" fill="#fff" /><path d="M4 6l2 2 3-4M8 7l1 1 3.500-4" fill="none" stroke="#999" strokeWidth="1.100" /></svg></Extension>
            <Extension><svg width="4" height="16" viewBox="0 0 4 16" fill="#4b4a48"><circle cx="2" cy="2.500" r="1.600" /><circle cx="2" cy="8" r="1.600" /><circle cx="2" cy="13.500" r="1.600" /></svg></Extension>
          </Toolbar>
          <Bookmarks>
            <Bookmark $w={70} $gap={10}>
              <svg width="13" height="13" viewBox="0 0 13 13">{dots.map((c, i) => <rect key={i} x={(i % 3) * 5} y={Math.floor(i / 3) * 5} width="3" height="3" fill={c} />)}</svg>
              <span>Apps</span>
            </Bookmark>
            <Bookmark $w={150} $fade={115}>
              <svg width="16" height="16" viewBox="0 0 16 16"><rect width="16" height="16" fill="#111" /><path d="M0 0h3v16H0zM5 0h4v5l3-5h4l-5 8 5 8h-4L9 11v5H5z" fill="#f8c12c" /></svg>
              <span>A Beginner’s Gui</span>
            </Bookmark>
            <Bookmark $w={150} $fade={114}>
              <svg width="16" height="14" viewBox="0 0 16 14"><path d="M1 1l4 2v11l-4-2z" fill="#12a86b" /><path d="M9 4l2-3 4 2v9l-4 2-3-4z" fill="#00e082" /><path d="M1 1l4.500 1.500L12 14H9.500L1 5z" fill="#00b868" /><path d="M9 4l2-3v11z" fill="#00e082" /></svg>
              <span>Medium – Read, w</span>
            </Bookmark>
            <Bookmark $w={150} $fade={114}>
              <svg width="16" height="16" viewBox="0 0 16 16"><circle cx="8" cy="8" r="7.200" fill="#fff" stroke="#37506e" strokeWidth="1.300" strokeDasharray="5 1" /><circle cx="8" cy="8" r="5.300" fill="#e96b34" /><path d="M4 6h5.500a2 2 0 0 1 0 4H6M6 8h3M6 8v5" fill="none" stroke="#fff" strokeWidth="1.200" /></svg>
              <span>Make Money Blo</span>
            </Bookmark>
            <Bookmark $w={150} $fade={114}>
              <svg width="16" height="16" viewBox="0 0 16 16"><circle cx="8" cy="8" r="7.200" fill="#fff" stroke="#222" strokeWidth="1.400" /><RsText x="8" y="10.700">RS</RsText></svg>
              <span>5 Latest Web Dev</span>
            </Bookmark>
            <Spacer />
            <Bar />
            <Other $w={144} $gap={8}>
              <svg width="15" height="13" viewBox="0 0 15 13"><path d="M0 1.500Q0 .5 1 .5h4.500l1.500 2h7q1 0 1 1V12q0 1-1 1H1q-1 0-1-1z" fill="#8a8886" /></svg>
              <span>Other bookmarks</span>
            </Other>
          </Bookmarks>
          <Editor>
            <Logo><span>m</span></Logo>
            <AppHeader>
              <Crumbs>
                <svg width="12" height="18" viewBox="0 0 12 18" fill="none" stroke="#e8503f" strokeWidth="1.400"><rect x=".7" y="7" width="10.600" height="9.500" rx="1" /><path d="M3.200 4.500V3.400a2.800 2.800 0 0 1 5.600 0V7" /><circle cx="6" cy="11.700" r="1" fill="#e8503f" /></svg>
                <div>Farmers<br />Post</div>
              </Crumbs>
              <Tool $w={62}>
                <ZoomRow>
                  <svg width="8" height="14"><path d="M0 7.500h8" stroke="#222" strokeWidth="1.300" /></svg>
                  <svg width="16" height="21" viewBox="0 0 16 21"><circle cx="9" cy="7.500" r="5.700" fill="none" stroke="#444" strokeWidth="2" /><path d="M5.500 12.500L2 20" stroke="#444" strokeWidth="2.500" /></svg>
                  <svg width="8" height="14"><path d="M0 7h8M4 3v8" stroke="#222" strokeWidth="1.300" /></svg>
                </ZoomRow>
                100%
              </Tool>
              <Tool $w={60}>
                <svg width="10" height="18" viewBox="0 0 10 18"><path d="M.5 1.500h3.200L5 2.500l1.300-1h3.200M.5 16.500h3.200l1.300-1 1.300 1h3.200M5 2v14M3 9h4" fill="none" stroke="#444" strokeWidth="1.900" /></svg>
                Select
              </Tool>
              <Tool $w={59}>
                <svg width="14" height="19" viewBox="0 0 14 19"><path d="M3.800 5q1.400-1.300 2.900 0V9.500l5.700 1.300q1.500.5 1.400 2L12.800 17q-.3 1.500-1.500 1.500H6.500q-1 0-1.500-.7L.6 12q1-1.500 3.200.6z" fill="#444" /><path d="M1 7.500V6M1 4l1-1.500M4 1.200h2M8 2l1.500 1M9.500 5v1.500" stroke="#444" strokeWidth="1" strokeDasharray="1.300 .7" /></svg>
                Hotspots
              </Tool>
              <Tool $w={61}>
                <svg width="14" height="14" viewBox="0 0 14 14"><path d="M1.500 5V1.500H5M9 1.500h3.500V5M12.500 9v3.500H9M5 12.500H1.500V9" fill="none" stroke="#444" strokeWidth="2" /></svg>
                Full Screen
              </Tool>
              <Pager>
                <Chevron c="#444" /><PageInput>9</PageInput>/ 9<PagerNext><Chevron c="#999" flip /></PagerNext>
              </Pager>
              <EditTool $w={64}><Pencil s={21} c="#444" />Edit Project</EditTool>
            </AppHeader>
            <Side>
              <SideItem $top={8}>
                <svg width="24" height="23" viewBox="0 0 24 23" fill="#444"><rect x="7" width="10" height="9" rx="1" /><path d="M12 9v3M5 14v-2h14v2" fill="none" stroke="#888" /><rect x=".5" y="14" width="10" height="9" rx="1" /><rect x="13.500" y="14" width="10" height="9" rx="1" /><path d="M8 1.800h8M1.500 15.800h8M14.500 15.800h8" stroke="#999" strokeWidth=".8" /></svg>
                Pages
              </SideItem>
              <SideItem $top={20}>
                <svg width="22" height="20" viewBox="0 0 22 20"><path d="M2 0h18q1.500 0 1.500 1.500v11q0 1.500-1.500 1.500h-5l-4 4-4-4H2Q.5 14 .5 12.500v-11Q.5 0 2 0z" fill="#444" /><circle cx="6.500" cy="5.500" r="2.500" fill="#fff" /><path d="M11.500 4h8M11.500 6.500h8M11.500 9h6" stroke="#fff" strokeWidth="1.200" /></svg>
                Comments
              </SideItem>
              <SideItem $bottom>
                <svg width="22" height="22" viewBox="0 0 22 22"><circle cx="11" cy="11" r="10.800" fill="#3d3d3d" /><path d="M7.300 8.500a3.700 3.700 0 1 1 5.600 3.100Q11 12.700 11 14.700" fill="none" stroke="#fff" strokeWidth="2.100" /><circle cx="11" cy="17.600" r="1.300" fill="#fff" /></svg>
                Support
              </SideItem>
            </Side>
            <Work>
              <Canvas>
                <Page>
                  <Nav>
                    <NavLink $ml={27} $low>Home</NavLink>
                    <NavLink $ml={18} $low>Map</NavLink>
                    <NavLink $ml={23}>Farmers</NavLink>
                    <NavLink $ml={15}>School</NavLink>
                    <NavLink $ml={17}>Support Us</NavLink>
                    <NavActive $ml={11} $low>Post</NavActive>
                    <NavLink $ml={261}>Log out</NavLink>
                  </Nav>
                  <Note><Pencil s={24} c="#570f2b" />Post your problem...</Note>
                  <PostButton>Post</PostButton>
                </Page>
              </Canvas>
              <VScroll>
                <Arrow d="M0 6h8L4 2z" c="#a3a3a3" />
                <Thumb $w={11} $h={671} />
                <VEnd><Arrow d="M0 2h8L4 6z" /></VEnd>
              </VScroll>
              <HScroll>
                <Arrow d="M6 0v8L2 4z" c="#a3a3a3" />
                <Thumb $w={1744} $h={11} />
                <HEnd><Arrow d="M2 0v8l4-4z" /></HEnd>
              </HScroll>
              <Corner />
            </Work>
          </Editor>
          <Shelf>
            <Download $w={231} $pl={20}><Thumbnail /><span>sunny.png</span><UpCaret /></Download>
            <Download $w={227} $pl={16}><Thumbnail /><span>paddy.jpg</span><UpCaret /></Download>
            <ShowAll>Show all</ShowAll>
            <CloseShelf><X s={10} c="#807e7b" /></CloseShelf>
          </Shelf>
        </Browser>
      </Body>
    </Screen>
  );
}
